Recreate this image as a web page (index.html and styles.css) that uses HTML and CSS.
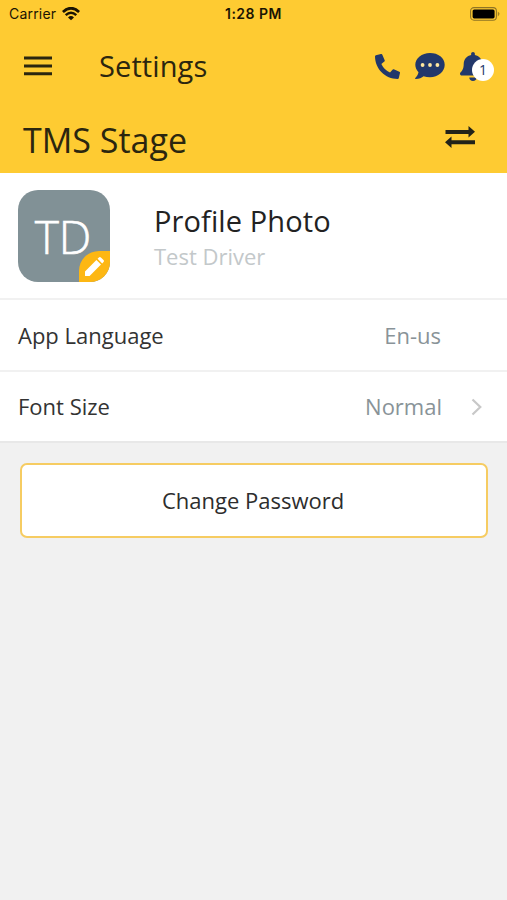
FILE: index.html
```
<!DOCTYPE html>
<html lang="en">
    <head>
        <meta charset="utf-8" />
        <title>Settings</title>
        <link rel="stylesheet" href="styles.css">
    </head>
    <body>
        <header class="header">
            <div class="status">
                <div class="carrier">
                    <span>Carrier</span>
                    <svg width="18" height="14" viewBox="0 0 18 14">
                        <path d="M.9 5Q9-2.500 17.100 5" fill="none" stroke="#1a1403" stroke-width="2.8"/>
                        <path d="M3.700 8.100Q9 3.300 14.300 8.100" fill="none" stroke="#1a1403" stroke-width="2.500"/>
                        <path d="M6 10.400Q9 7.800 12 10.400L9 13.300z" fill="#1a1403"/>
                    </svg>
                </div>
                <span class="time">1:28 PM</span>
                <svg class="battery" width="31" height="14" viewBox="0 0 31 14">
                    <rect x=".6" y=".6" width="25.8" height="12.6" rx="3.4" fill="none" stroke="#8f7425" stroke-width="1.1"/>
                    <rect x="2.6" y="2.4" width="22" height="9" rx="1.6"/>
                    <path d="M27.8 4.4q3.4 2.4 0 5z" fill="#a3821f"/>
                </svg>
            </div>

            <div class="nav">
                <svg class="menu" width="28" height="20" viewBox="0 0 28 20">
                    <path d="M0 2h28M0 10h28M0 17.7h28" stroke="#2b260f" stroke-width="2.9"/>
                </svg>
                <h1>Settings</h1>
                <div class="actions">
                    <svg width="25" height="25" viewBox="0 0 512 512">
                        <path d="M497.39 361.8l-112-48a24 24 0 0 0-28 6.9l-49.6 60.6A370.66 370.66 0 0 1 130.6 204.11l60.6-49.6a23.94 23.94 0 0 0 6.9-28l-48-112A24.16 24.16 0 0 0 122.6.61l-104 24A24 24 0 0 0 0 48c0 256.5 207.9 464 464 464a24 24 0 0 0 23.4-18.6l24-104a24.29 24.29 0 0 0-14.01-27.6z"/>
                    </svg>
                    <svg class="chat" width="30" height="26" viewBox="0 0 30 26">
                        <path d="M15 0C6.800 0 .3 5.200.3 11.800c0 2.800 1.200 5.300 3.200 7.400C3 21.600 1.800 23.400.3 25c-.4.5-.1 1 .5 1 3.300 0 6-1.400 7.800-2.800 2 .7 4.100 1.100 6.400 1.100 8.200 0 14.700-5.600 14.700-12.500S23.200 0 15 0z"/>
                        <g fill="#fee7a0">
                            <circle cx="7.600" cy="12" r="1.900"/>
                            <circle cx="15" cy="12" r="1.900"/>
                            <circle cx="22.400" cy="12" r="1.900"/>
                        </g>
                    </svg>
                    <div class="alerts">
                        <svg width="26" height="29" viewBox="0 0 448 512" preserveAspectRatio="none">
                            <path d="M224 512c35.32 0 63.97-28.65 63.97-64H160.03c0 35.35 28.65 64 63.97 64zm215.39-149.71c-19.32-20.76-55.47-51.99-55.47-154.29 0-77.7-54.48-139.9-127.94-155.16V32c0-17.67-14.32-32-31.98-32s-31.98 14.33-31.98 32v20.84C118.56 68.1 64.08 130.3 64.08 208c0 102.3-36.15 133.53-55.47 154.29-6 6.45-8.66 14.16-8.61 21.71.11 16.4 12.98 32 32.1 32h383.8c19.12 0 32-15.6 32.1-32 .05-7.55-2.61-15.27-8.61-21.71z"/>
                        </svg>
                        <span class="badge">1</span>
                    </div>
                </div>
            </div>

            <div class="company">
                <h2>TMS Stage</h2>
                <svg width="30" height="22" viewBox="0 0 30 22">
                    <path d="M.5 3.900h23V0L30 5.800l-6.500 5.700V7.900H.5zM30 14.200H6.500V10.500L0 16.200 6.500 22v-3.800H30z" fill="#222319"/>
                </svg>
            </div>
        </header>

        <div class="profile">
            <div class="avatar">
                <span>TD</span>
                <div class="edit">
                    <svg width="19" height="19" viewBox="0 0 19 19">
                        <path d="M0 19v-4.600L11.400 3l4.600 4.600L4.600 19zM12.600 1.800L13.900.5q1-.9 2 0L18.500 3.100q.9 1 0 2L17.200 6.400z" fill="#fff"/>
                    </svg>
                </div>
            </div>
            <div class="info">
                <div class="title">Profile Photo</div>
                <div class="name">Test Driver</div>
            </div>
        </div>

        <div class="row">
            <span>App Language</span>
            <span class="value">En-us</span>
        </div>
        <div class="row last">
            <span>Font Size</span>
            <span class="value">Normal</span>
            <svg class="arrow" width="11" height="18" viewBox="0 0 11 18">
                <path d="M1.500 1.500L9.300 9l-7.800 7.500" fill="none" stroke="#c8c8c8" stroke-width="2.200"/>
            </svg>
        </div>

        <button class="password">Change Password</button>
    </body>
</html>
```
FILE: styles.css
```
* {
    box-sizing: border-box;
}

body,html {
    margin: 0;
    padding: 0;
}

body {
    min-height: 100vh;
    background: #f1f1f1;
    font-family: "Open Sans", sans-serif;
    color: #222;
}

svg {
    display: block;
    flex-shrink: 0;
}

h1,h2 {
    margin: 0;
    font-weight: 400;
    color: #2b260f;
}

.header {
    height: 173px;
    background: #fecb32;
}

.status {
    display: grid;
    grid-template-columns: 1fr auto 1fr;
    align-items: center;
    height: 27px;
    padding: 0 6px 0 9px;
    font-family: Inter, sans-serif;
    font-size: 14px;
    color: #1a1403;
}

.carrier {
    display: flex;
    align-items: center;
    gap: 6px;
    letter-spacing: .2px;
}

.time {
    margin-right: 3px;
    font-weight: 600;
    letter-spacing: .5px;
}

.battery {
    justify-self: end;
}

.nav {
    display: flex;
    align-items: center;
    height: 78px;
    padding: 0 21px 0 24px;
}

.nav h1 {
    margin-left: 47px;
    font-size: 29px;
    line-height: 40px;
    letter-spacing: .1px;
}

.actions {
    display: flex;
    align-items: center;
    margin-left: auto;
    fill: #22386b;
}

.chat {
    margin: 0 15px;
}

.alerts {
    position: relative;
}

.badge {
    position: absolute;
    left: 12px;
    top: 7px;
    width: 22px;
    height: 22px;
    border-radius: 50%;
    background: #fff;
    color: #22386b;
    font-size: 14px;
    line-height: 22px;
    text-align: center;
}

.company {
    display: flex;
    align-items: center;
    justify-content: space-between;
    height: 68px;
    padding: 0 32px 4px 23px;
}

.company h2 {
    padding-top: 5px;
    font-size: 34px;
    line-height: 46px;
}

.profile {
    display: flex;
    height: 127px;
    padding: 17px 18px 0;
    background: #fff;
    border-bottom: 2px solid #f1f1f1;
}

.avatar {
    position: relative;
    width: 92px;
    height: 92px;
    padding-right: 2px;
    border-radius: 20px;
    background: #819196;
    color: #fff;
    font-size: 46px;
    font-weight: 300;
    line-height: 93px;
    text-align: center;
    -webkit-text-stroke: .6px #fff;
    overflow: hidden;
}

.edit {
    position: absolute;
    right: 0;
    bottom: 0;
    display: flex;
    align-items: center;
    justify-content: center;
    width: 31px;
    height: 31px;
    border-radius: 20px 0 0 0;
    background: #fdb713;
}

.info {
    margin-left: 44px;
    padding-top: 11px;
}

.title {
    font-size: 29px;
    line-height: 40px;
    letter-spacing: .1px;
}

.name {
    font-size: 22px;
    line-height: 30px;
    color: #c3c8ca;
}

.row {
    display: flex;
    align-items: center;
    height: 72px;
    padding: 0 66px 0 18px;
    background: #fff;
    border-bottom: 2px solid #f1f1f1;
    font-size: 22px;
    color: #333;
}

.row span {
    margin-top: -1px;
}

.row.last {
    height: 71px;
    border-bottom-color: #e8e8e8;
}

.value {
    margin-left: auto;
    color: #899398;
}

.last .value {
    margin-right: -1px;
}

.arrow {
    margin: 0 -41px 0 30px;
}

.password {
    display: block;
    width: 468px;
    height: 75px;
    margin: 20px 19px 0 20px;
    padding: 0 2px 2px 0;
    border: 2px solid #f6cc62;
    border-radius: 7px;
    background: #fff;
    font-family: inherit;
    font-size: 22px;
    color: #2d2d2d;
}
```
